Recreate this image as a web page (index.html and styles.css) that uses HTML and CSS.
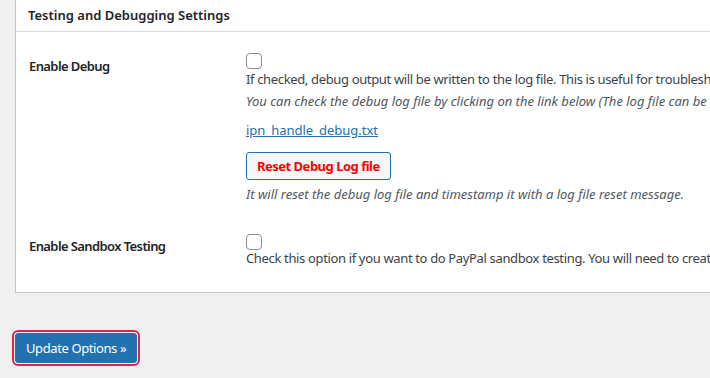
FILE: index.html
```html
<!DOCTYPE html>
<html lang="en">
<head>
    <meta charset="UTF-8">
    <meta name="viewport" content="width=device-width, initial-scale=1.0">
    <title>Testing and Debugging Settings</title>
    <link rel="stylesheet" href="styles.css">
</head>
<body>
    <div class="wrap">
        <div class="postbox">
            <h3 class="hndle">Testing and Debugging Settings</h3>
            <div class="inside">
                <div class="form-row row-debug">
                    <div class="form-label">Enable Debug</div>
                    <div class="form-field">
                        <span class="checkbox"></span>
                        <p class="desc">If checked, debug output will be written to the log file. This is useful for troubleshooting post payment failures.</p>
                        <p class="desc note">You can check the debug log file by clicking on the link below (The log file can be viewed using any text editor):</p>
                        <p class="log-link"><a href="#">ipn_handle_debug.txt</a></p>
                        <button type="button" class="btn-reset">Reset Debug Log file</button>
                        <p class="desc note small-gap">It will reset the debug log file and timestamp it with a log file reset message.</p>
                    </div>
                </div>
                <div class="form-row row-sandbox">
                    <div class="form-label">Enable Sandbox Testing</div>
                    <div class="form-field">
                        <span class="checkbox"></span>
                        <p class="desc">Check this option if you want to do PayPal sandbox testing. You will need to create a developer account.</p>
                    </div>
                </div>
            </div>
        </div>

        <div class="submit">
            <button type="submit" class="btn-primary">Update Options &raquo;</button>
        </div>
    </div>
</body>
</html>
```

FILE: styles.css
```css
body, html {
    margin: 0;
    padding: 0;
    height: 100%;
    overflow: hidden;
    background-color: #f0f0f1;
    font-family: "Noto Sans", "Open Sans", sans-serif;
    font-size: 13px;
    color: #3c434a;
}
.wrap {
    padding-left: 15px;
}
.postbox {
    width: 780px;
    background-color: #fff;
    border: 1px solid #c3c4c7;
    border-top: none;
}
.hndle {
    margin: 0;
    padding: 0 12px;
    height: 31px;
    line-height: 31px;
    font-size: 13px;
    font-weight: 600;
    color: #1d2327;
    border-bottom: 1px solid #dcdcde;
}
.form-row {
    display: grid;
    grid-template-columns: 217px 1fr;
    padding-left: 13px;
}
.row-debug {
    padding-top: 21px;
    padding-bottom: 9px;
}
.row-sandbox {
    padding-top: 21px;
    padding-bottom: 24px;
}
.form-label {
    padding-top: 3px;
    line-height: 20px;
    font-weight: 600;
    letter-spacing: -0.6px;
    color: #1d2327;
}
.row-sandbox .form-label {
    padding-top: 2px;
}
.form-field {
    white-space: nowrap;
    overflow: hidden;
}
.checkbox {
    display: block;
    width: 14px;
    height: 14px;
    border: 1px solid #8c8f94;
    border-radius: 4px;
    background-color: #fff;
}
.desc {
    margin: 0;
    line-height: 20px;
    letter-spacing: -0.35px;
}
.row-sandbox .desc {
    margin-top: -2px;
}
.note {
    margin-top: 2px;
    font-style: italic;
    letter-spacing: 0;
    color: #50575e;
}
.small-gap {
    margin-top: 4px;
}
.log-link {
    margin: 9px 0 0;
    line-height: 20px;
}
.log-link a {
    color: #2271b1;
}
.btn-reset {
    display: block;
    margin-top: 12px;
    height: 28px;
    padding: 0 10px;
    font-family: inherit;
    font-size: 13px;
    font-weight: 700;
    letter-spacing: -0.5px;
    color: #ff0000;
    background-color: #f6f7f7;
    border: 1px solid #2271b1;
    border-radius: 3px;
    cursor: pointer;
}
.submit {
    padding-top: 40px;
}
.btn-primary {
    height: 30px;
    padding: 0 10px;
    font-family: inherit;
    font-size: 13px;
    letter-spacing: -0.4px;
    color: #fff;
    background-color: #2271b1;
    border: 1px solid #2271b1;
    border-radius: 3px;
    outline: 2px solid #e0224c;
    outline-offset: 1px;
    cursor: pointer;
}
```
